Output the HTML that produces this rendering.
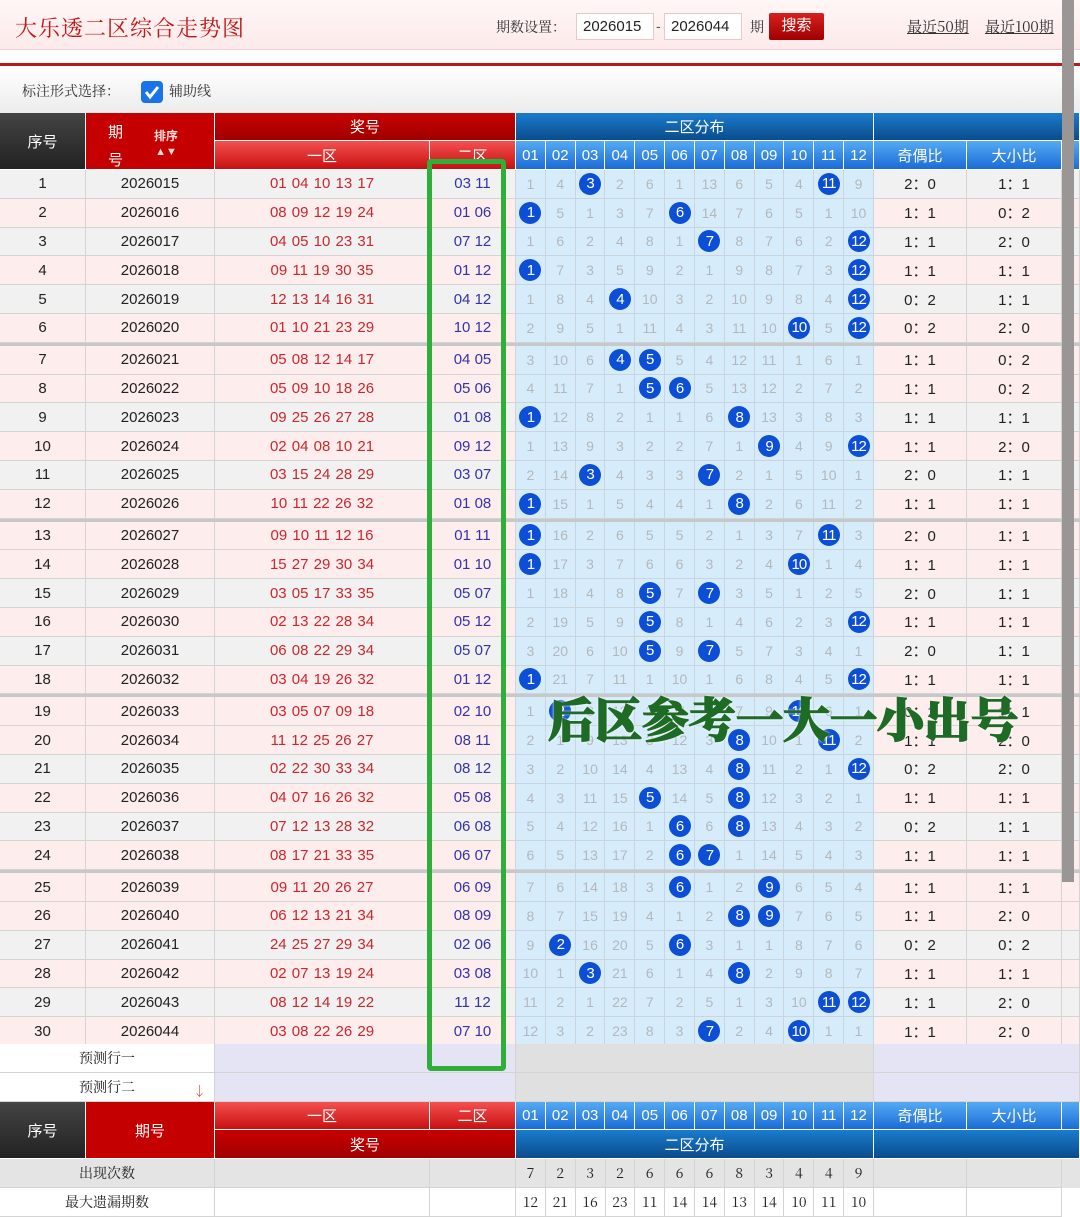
<!DOCTYPE html>
<html><head><meta charset="utf-8"><style>
*{margin:0;padding:0;box-sizing:border-box}
body{width:1080px;height:1208px;overflow:hidden;background:#fff;font-family:"Liberation Sans","Noto Sans CJK SC",sans-serif;position:relative}
.top{position:absolute;left:0;top:0;width:1080px;height:50px;background:linear-gradient(#fff6f6,#fdeaea);border-bottom:1px solid #f0d0d0}
.title{position:absolute;left:15px;top:12px;font-size:22px;color:#c01818;font-family:"Noto Serif CJK SC",serif;letter-spacing:1px}
.qs{position:absolute;left:496px;top:17px;font-size:14px;color:#333;font-family:"Noto Serif CJK SC",serif}
.inp{position:absolute;top:13px;height:27px;width:78px;background:#fff;border:1px solid #e8c8c8;font-size:15px;padding:4px 0 0 6px;color:#222}
.btn{position:absolute;left:769px;top:13px;width:55px;height:27px;background:linear-gradient(#d82020,#a00000);color:#fff;font-size:15px;text-align:center;line-height:26px;border-radius:2px}
.lk{position:absolute;top:16px;font-size:15px;color:#333;text-decoration:underline;font-family:"Noto Serif CJK SC",serif}
.redl{position:absolute;left:0;top:63px;width:1080px;height:3px;background:#b81c1c}
.bar{position:absolute;left:0;top:67px;width:1080px;height:46px;background:linear-gradient(#fff,#ececec)}
.bar .t{position:absolute;left:22px;top:14px;font-size:14px;color:#333;font-family:"Noto Serif CJK SC",serif}
.cb{position:absolute;left:141px;top:81px;width:22px;height:22px;border-radius:4px;background:#1a73e8}
.h{position:absolute;color:#fff;text-align:center;font-size:15px;border-right:1px solid #fff;border-bottom:1px solid #fff;display:flex;align-items:center;justify-content:center}
.dk{background:linear-gradient(#444,#222)}
.rd{background:#c40000}
.rd2{background:linear-gradient(#c80000,#a00000)}
.rl{background:linear-gradient(#f45050,#c81010)}
.bd{background:linear-gradient(#1a7ccc,#0a4c8c)}
.bl{background:linear-gradient(#55aaf2,#1a6cd8)}
#t{position:absolute;left:0;top:170px;width:1080px}
.r{display:flex;height:28.8px;font-size:15px;color:#222;background:#fdeded}
.r.g{background:#f1f1f1}
.r s{text-decoration:none;display:flex;align-items:center;justify-content:center;border-right:1px solid #d4d4d4;border-bottom:1px solid #d4d4d4}
.c0{width:86px}.c1{width:129px}.c2{width:215px;color:#c8282e;word-spacing:1px}.c3{width:86px;color:#3434a8}.c4{width:93px}.c5{width:95px}.c6{width:18px}
.d{width:358px;display:flex;background:#d6ecfb}
.d i{font-style:normal;flex:1;display:flex;align-items:center;justify-content:center;border-right:1px solid #c8d4de;border-bottom:1px solid #c8d4de;color:#b4b8bc;font-size:14px}
.d b{width:22px;height:22px;border-radius:50%;background:#0c4fd6;color:#fff;font-weight:normal;font-size:15px;display:flex;align-items:center;justify-content:center;letter-spacing:-1px}
.sep{height:3px;background:#c8c8c8}
.pr{position:absolute;left:0;width:1080px;height:29px;display:flex}
.pr div{height:29px;border-right:1px solid #d4d4d4;border-bottom:1px solid #d4d4d4;display:flex;align-items:center;justify-content:center;font-size:14px;color:#222;font-family:"Noto Serif CJK SC",serif}
.green{position:absolute;left:427px;top:159px;width:79px;height:912px;border:5px solid #2fae3a;border-radius:4px}
.ov{position:absolute;left:548px;top:684px;font-size:47px;font-weight:900;color:#1e6b26;font-family:"Noto Serif CJK SC",serif;letter-spacing:0px;-webkit-text-stroke:1.5px #1e6b26;text-shadow:0 0 3px #fff,0 0 3px #fff}
.sb{position:absolute;left:1062px;top:0;width:12px;height:882px;background:#9a9696}
</style></head><body>
<div class="top"></div>
<div class="title">大乐透二区综合走势图</div>
<div class="qs">期数设置：</div>
<div class="inp" style="left:576px">2026015</div>
<div style="position:absolute;left:656px;top:18px;font-size:14px;color:#555">-</div>
<div class="inp" style="left:664px">2026044</div>
<div class="qs" style="left:750px">期</div>
<div class="btn">搜索</div>
<div class="lk" style="left:907px">最近50期</div>
<div class="lk" style="left:985px">最近100期</div>
<div class="redl"></div>
<div class="bar"><div class="t">标注形式选择：</div><div class="t" style="left:169px">辅助线</div></div>
<div class="cb"><svg width="22" height="22"><path d="M5 11l4 5 8-10" stroke="#fff" stroke-width="3" fill="none"/></svg></div>

<div class="h dk" style="left:0;top:113px;width:86px;height:57px">序号</div>
<div class="h rd" style="left:86px;top:113px;width:129px;height:57px"><div style="position:absolute;left:22px;top:6px;line-height:28px;font-size:15px">期<br>号</div><div style="position:absolute;left:68px;top:14px;font-size:12px;font-weight:bold;color:#fdd">排序<br><span style="font-size:11px">▲▼</span></div></div>
<div class="h rd2" style="left:215px;top:113px;width:301px;height:28px">奖号</div>
<div class="h rl" style="left:215px;top:141px;width:215px;height:29px">一区</div>
<div class="h rl" style="left:430px;top:141px;width:86px;height:29px">二区</div>
<div class="h bd" style="left:516px;top:113px;width:358px;height:28px">二区分布</div>
<div class="h bd" style="left:874px;top:113px;width:206px;height:28px"></div>
<div style="position:absolute;left:516px;top:141px;width:358px;height:29px;display:flex">
<div class="h bl" style="position:static;flex:1">01</div><div class="h bl" style="position:static;flex:1">02</div><div class="h bl" style="position:static;flex:1">03</div><div class="h bl" style="position:static;flex:1">04</div><div class="h bl" style="position:static;flex:1">05</div><div class="h bl" style="position:static;flex:1">06</div><div class="h bl" style="position:static;flex:1">07</div><div class="h bl" style="position:static;flex:1">08</div><div class="h bl" style="position:static;flex:1">09</div><div class="h bl" style="position:static;flex:1">10</div><div class="h bl" style="position:static;flex:1">11</div><div class="h bl" style="position:static;flex:1">12</div></div>
<div class="h bl" style="left:874px;top:141px;width:93px;height:29px">奇偶比</div>
<div class="h bl" style="left:967px;top:141px;width:95px;height:29px">大小比</div>
<div class="h bl" style="left:1062px;top:141px;width:18px;height:29px"></div>

<div id="t">
<div class="r g"><s class="c0">1</s><s class="c1">2026015</s><s class="c2">01 04 10 13 17</s><s class="c3">03 11</s><div class="d"><i>1</i><i>4</i><i><b>3</b></i><i>2</i><i>6</i><i>1</i><i>13</i><i>6</i><i>5</i><i>4</i><i><b>11</b></i><i>9</i></div><s class="c4">2：0</s><s class="c5">1：1</s><s class="c6"></s></div>
<div class="r"><s class="c0">2</s><s class="c1">2026016</s><s class="c2">08 09 12 19 24</s><s class="c3">01 06</s><div class="d"><i><b>1</b></i><i>5</i><i>1</i><i>3</i><i>7</i><i><b>6</b></i><i>14</i><i>7</i><i>6</i><i>5</i><i>1</i><i>10</i></div><s class="c4">1：1</s><s class="c5">0：2</s><s class="c6"></s></div>
<div class="r g"><s class="c0">3</s><s class="c1">2026017</s><s class="c2">04 05 10 23 31</s><s class="c3">07 12</s><div class="d"><i>1</i><i>6</i><i>2</i><i>4</i><i>8</i><i>1</i><i><b>7</b></i><i>8</i><i>7</i><i>6</i><i>2</i><i><b>12</b></i></div><s class="c4">1：1</s><s class="c5">2：0</s><s class="c6"></s></div>
<div class="r"><s class="c0">4</s><s class="c1">2026018</s><s class="c2">09 11 19 30 35</s><s class="c3">01 12</s><div class="d"><i><b>1</b></i><i>7</i><i>3</i><i>5</i><i>9</i><i>2</i><i>1</i><i>9</i><i>8</i><i>7</i><i>3</i><i><b>12</b></i></div><s class="c4">1：1</s><s class="c5">1：1</s><s class="c6"></s></div>
<div class="r g"><s class="c0">5</s><s class="c1">2026019</s><s class="c2">12 13 14 16 31</s><s class="c3">04 12</s><div class="d"><i>1</i><i>8</i><i>4</i><i><b>4</b></i><i>10</i><i>3</i><i>2</i><i>10</i><i>9</i><i>8</i><i>4</i><i><b>12</b></i></div><s class="c4">0：2</s><s class="c5">1：1</s><s class="c6"></s></div>
<div class="r"><s class="c0">6</s><s class="c1">2026020</s><s class="c2">01 10 21 23 29</s><s class="c3">10 12</s><div class="d"><i>2</i><i>9</i><i>5</i><i>1</i><i>11</i><i>4</i><i>3</i><i>11</i><i>10</i><i><b>10</b></i><i>5</i><i><b>12</b></i></div><s class="c4">0：2</s><s class="c5">2：0</s><s class="c6"></s></div>
<div class="sep"></div>
<div class="r"><s class="c0">7</s><s class="c1">2026021</s><s class="c2">05 08 12 14 17</s><s class="c3">04 05</s><div class="d"><i>3</i><i>10</i><i>6</i><i><b>4</b></i><i><b>5</b></i><i>5</i><i>4</i><i>12</i><i>11</i><i>1</i><i>6</i><i>1</i></div><s class="c4">1：1</s><s class="c5">0：2</s><s class="c6"></s></div>
<div class="r"><s class="c0">8</s><s class="c1">2026022</s><s class="c2">05 09 10 18 26</s><s class="c3">05 06</s><div class="d"><i>4</i><i>11</i><i>7</i><i>1</i><i><b>5</b></i><i><b>6</b></i><i>5</i><i>13</i><i>12</i><i>2</i><i>7</i><i>2</i></div><s class="c4">1：1</s><s class="c5">0：2</s><s class="c6"></s></div>
<div class="r g"><s class="c0">9</s><s class="c1">2026023</s><s class="c2">09 25 26 27 28</s><s class="c3">01 08</s><div class="d"><i><b>1</b></i><i>12</i><i>8</i><i>2</i><i>1</i><i>1</i><i>6</i><i><b>8</b></i><i>13</i><i>3</i><i>8</i><i>3</i></div><s class="c4">1：1</s><s class="c5">1：1</s><s class="c6"></s></div>
<div class="r"><s class="c0">10</s><s class="c1">2026024</s><s class="c2">02 04 08 10 21</s><s class="c3">09 12</s><div class="d"><i>1</i><i>13</i><i>9</i><i>3</i><i>2</i><i>2</i><i>7</i><i>1</i><i><b>9</b></i><i>4</i><i>9</i><i><b>12</b></i></div><s class="c4">1：1</s><s class="c5">2：0</s><s class="c6"></s></div>
<div class="r g"><s class="c0">11</s><s class="c1">2026025</s><s class="c2">03 15 24 28 29</s><s class="c3">03 07</s><div class="d"><i>2</i><i>14</i><i><b>3</b></i><i>4</i><i>3</i><i>3</i><i><b>7</b></i><i>2</i><i>1</i><i>5</i><i>10</i><i>1</i></div><s class="c4">2：0</s><s class="c5">1：1</s><s class="c6"></s></div>
<div class="r"><s class="c0">12</s><s class="c1">2026026</s><s class="c2">10 11 22 26 32</s><s class="c3">01 08</s><div class="d"><i><b>1</b></i><i>15</i><i>1</i><i>5</i><i>4</i><i>4</i><i>1</i><i><b>8</b></i><i>2</i><i>6</i><i>11</i><i>2</i></div><s class="c4">1：1</s><s class="c5">1：1</s><s class="c6"></s></div>
<div class="sep"></div>
<div class="r"><s class="c0">13</s><s class="c1">2026027</s><s class="c2">09 10 11 12 16</s><s class="c3">01 11</s><div class="d"><i><b>1</b></i><i>16</i><i>2</i><i>6</i><i>5</i><i>5</i><i>2</i><i>1</i><i>3</i><i>7</i><i><b>11</b></i><i>3</i></div><s class="c4">2：0</s><s class="c5">1：1</s><s class="c6"></s></div>
<div class="r"><s class="c0">14</s><s class="c1">2026028</s><s class="c2">15 27 29 30 34</s><s class="c3">01 10</s><div class="d"><i><b>1</b></i><i>17</i><i>3</i><i>7</i><i>6</i><i>6</i><i>3</i><i>2</i><i>4</i><i><b>10</b></i><i>1</i><i>4</i></div><s class="c4">1：1</s><s class="c5">1：1</s><s class="c6"></s></div>
<div class="r g"><s class="c0">15</s><s class="c1">2026029</s><s class="c2">03 05 17 33 35</s><s class="c3">05 07</s><div class="d"><i>1</i><i>18</i><i>4</i><i>8</i><i><b>5</b></i><i>7</i><i><b>7</b></i><i>3</i><i>5</i><i>1</i><i>2</i><i>5</i></div><s class="c4">2：0</s><s class="c5">1：1</s><s class="c6"></s></div>
<div class="r"><s class="c0">16</s><s class="c1">2026030</s><s class="c2">02 13 22 28 34</s><s class="c3">05 12</s><div class="d"><i>2</i><i>19</i><i>5</i><i>9</i><i><b>5</b></i><i>8</i><i>1</i><i>4</i><i>6</i><i>2</i><i>3</i><i><b>12</b></i></div><s class="c4">1：1</s><s class="c5">1：1</s><s class="c6"></s></div>
<div class="r g"><s class="c0">17</s><s class="c1">2026031</s><s class="c2">06 08 22 29 34</s><s class="c3">05 07</s><div class="d"><i>3</i><i>20</i><i>6</i><i>10</i><i><b>5</b></i><i>9</i><i><b>7</b></i><i>5</i><i>7</i><i>3</i><i>4</i><i>1</i></div><s class="c4">2：0</s><s class="c5">1：1</s><s class="c6"></s></div>
<div class="r"><s class="c0">18</s><s class="c1">2026032</s><s class="c2">03 04 19 26 32</s><s class="c3">01 12</s><div class="d"><i><b>1</b></i><i>21</i><i>7</i><i>11</i><i>1</i><i>10</i><i>1</i><i>6</i><i>8</i><i>4</i><i>5</i><i><b>12</b></i></div><s class="c4">1：1</s><s class="c5">1：1</s><s class="c6"></s></div>
<div class="sep"></div>
<div class="r"><s class="c0">19</s><s class="c1">2026033</s><s class="c2">03 05 07 09 18</s><s class="c3">02 10</s><div class="d"><i>1</i><i><b>2</b></i><i>8</i><i>12</i><i>2</i><i>11</i><i>2</i><i>7</i><i>9</i><i><b>10</b></i><i>6</i><i>1</i></div><s class="c4">0：2</s><s class="c5">1：1</s><s class="c6"></s></div>
<div class="r"><s class="c0">20</s><s class="c1">2026034</s><s class="c2">11 12 25 26 27</s><s class="c3">08 11</s><div class="d"><i>2</i><i>1</i><i>9</i><i>13</i><i>3</i><i>12</i><i>3</i><i><b>8</b></i><i>10</i><i>1</i><i><b>11</b></i><i>2</i></div><s class="c4">1：1</s><s class="c5">2：0</s><s class="c6"></s></div>
<div class="r g"><s class="c0">21</s><s class="c1">2026035</s><s class="c2">02 22 30 33 34</s><s class="c3">08 12</s><div class="d"><i>3</i><i>2</i><i>10</i><i>14</i><i>4</i><i>13</i><i>4</i><i><b>8</b></i><i>11</i><i>2</i><i>1</i><i><b>12</b></i></div><s class="c4">0：2</s><s class="c5">2：0</s><s class="c6"></s></div>
<div class="r"><s class="c0">22</s><s class="c1">2026036</s><s class="c2">04 07 16 26 32</s><s class="c3">05 08</s><div class="d"><i>4</i><i>3</i><i>11</i><i>15</i><i><b>5</b></i><i>14</i><i>5</i><i><b>8</b></i><i>12</i><i>3</i><i>2</i><i>1</i></div><s class="c4">1：1</s><s class="c5">1：1</s><s class="c6"></s></div>
<div class="r g"><s class="c0">23</s><s class="c1">2026037</s><s class="c2">07 12 13 28 32</s><s class="c3">06 08</s><div class="d"><i>5</i><i>4</i><i>12</i><i>16</i><i>1</i><i><b>6</b></i><i>6</i><i><b>8</b></i><i>13</i><i>4</i><i>3</i><i>2</i></div><s class="c4">0：2</s><s class="c5">1：1</s><s class="c6"></s></div>
<div class="r"><s class="c0">24</s><s class="c1">2026038</s><s class="c2">08 17 21 33 35</s><s class="c3">06 07</s><div class="d"><i>6</i><i>5</i><i>13</i><i>17</i><i>2</i><i><b>6</b></i><i><b>7</b></i><i>1</i><i>14</i><i>5</i><i>4</i><i>3</i></div><s class="c4">1：1</s><s class="c5">1：1</s><s class="c6"></s></div>
<div class="sep"></div>
<div class="r"><s class="c0">25</s><s class="c1">2026039</s><s class="c2">09 11 20 26 27</s><s class="c3">06 09</s><div class="d"><i>7</i><i>6</i><i>14</i><i>18</i><i>3</i><i><b>6</b></i><i>1</i><i>2</i><i><b>9</b></i><i>6</i><i>5</i><i>4</i></div><s class="c4">1：1</s><s class="c5">1：1</s><s class="c6"></s></div>
<div class="r"><s class="c0">26</s><s class="c1">2026040</s><s class="c2">06 12 13 21 34</s><s class="c3">08 09</s><div class="d"><i>8</i><i>7</i><i>15</i><i>19</i><i>4</i><i>1</i><i>2</i><i><b>8</b></i><i><b>9</b></i><i>7</i><i>6</i><i>5</i></div><s class="c4">1：1</s><s class="c5">2：0</s><s class="c6"></s></div>
<div class="r g"><s class="c0">27</s><s class="c1">2026041</s><s class="c2">24 25 27 29 34</s><s class="c3">02 06</s><div class="d"><i>9</i><i><b>2</b></i><i>16</i><i>20</i><i>5</i><i><b>6</b></i><i>3</i><i>1</i><i>1</i><i>8</i><i>7</i><i>6</i></div><s class="c4">0：2</s><s class="c5">0：2</s><s class="c6"></s></div>
<div class="r"><s class="c0">28</s><s class="c1">2026042</s><s class="c2">02 07 13 19 24</s><s class="c3">03 08</s><div class="d"><i>10</i><i>1</i><i><b>3</b></i><i>21</i><i>6</i><i>1</i><i>4</i><i><b>8</b></i><i>2</i><i>9</i><i>8</i><i>7</i></div><s class="c4">1：1</s><s class="c5">1：1</s><s class="c6"></s></div>
<div class="r g"><s class="c0">29</s><s class="c1">2026043</s><s class="c2">08 12 14 19 22</s><s class="c3">11 12</s><div class="d"><i>11</i><i>2</i><i>1</i><i>22</i><i>7</i><i>2</i><i>5</i><i>1</i><i>3</i><i>10</i><i><b>11</b></i><i><b>12</b></i></div><s class="c4">1：1</s><s class="c5">2：0</s><s class="c6"></s></div>
<div class="r"><s class="c0">30</s><s class="c1">2026044</s><s class="c2">03 08 22 26 29</s><s class="c3">07 10</s><div class="d"><i>12</i><i>3</i><i>2</i><i>23</i><i>8</i><i>3</i><i><b>7</b></i><i>2</i><i>4</i><i><b>10</b></i><i>1</i><i>1</i></div><s class="c4">1：1</s><s class="c5">2：0</s><s class="c6"></s></div>
</div>

<div class="pr" style="top:1044px"><div style="width:215px;background:#fff">预测行一</div><div style="width:301px;background:#e4e4f4"></div><div style="width:358px;background:#e0e0e0"></div><div style="width:206px;background:#e4e4f4"></div></div>
<div class="pr" style="top:1073px"><div style="width:215px;background:#fff;position:relative">预测行二<span style="position:absolute;right:8px;top:8px;color:#d03010;font-size:13px">↓</span></div><div style="width:301px;background:#e4e4f4"></div><div style="width:358px;background:#e0e0e0"></div><div style="width:206px;background:#e4e4f4"></div></div>

<div class="h dk" style="left:0;top:1102px;width:86px;height:57px">序号</div>
<div class="h rd" style="left:86px;top:1102px;width:129px;height:57px">期号</div>
<div class="h rl" style="left:215px;top:1102px;width:215px;height:28px">一区</div>
<div class="h rl" style="left:430px;top:1102px;width:86px;height:28px">二区</div>
<div class="h rd2" style="left:215px;top:1130px;width:301px;height:29px">奖号</div>
<div style="position:absolute;left:516px;top:1102px;width:358px;height:28px;display:flex">
<div class="h bl" style="position:static;flex:1">01</div><div class="h bl" style="position:static;flex:1">02</div><div class="h bl" style="position:static;flex:1">03</div><div class="h bl" style="position:static;flex:1">04</div><div class="h bl" style="position:static;flex:1">05</div><div class="h bl" style="position:static;flex:1">06</div><div class="h bl" style="position:static;flex:1">07</div><div class="h bl" style="position:static;flex:1">08</div><div class="h bl" style="position:static;flex:1">09</div><div class="h bl" style="position:static;flex:1">10</div><div class="h bl" style="position:static;flex:1">11</div><div class="h bl" style="position:static;flex:1">12</div></div>
<div class="h bl" style="left:874px;top:1102px;width:93px;height:28px">奇偶比</div>
<div class="h bl" style="left:967px;top:1102px;width:95px;height:28px">大小比</div>
<div class="h bl" style="left:1062px;top:1102px;width:18px;height:28px"></div>
<div class="h bd" style="left:516px;top:1130px;width:358px;height:29px">二区分布</div>
<div class="h bd" style="left:874px;top:1130px;width:206px;height:29px"></div>

<div class="pr" style="top:1159px;background:#e4e4e4"><div style="width:215px">出现次数</div><div style="width:215px"></div><div style="width:86px"></div><div style="width:358px;display:flex;border:none"><div style="flex:1">7</div><div style="flex:1">2</div><div style="flex:1">3</div><div style="flex:1">2</div><div style="flex:1">6</div><div style="flex:1">6</div><div style="flex:1">6</div><div style="flex:1">8</div><div style="flex:1">3</div><div style="flex:1">4</div><div style="flex:1">4</div><div style="flex:1">9</div></div><div style="width:93px"></div><div style="width:95px"></div></div>
<div class="pr" style="top:1188px;background:#fff"><div style="width:215px">最大遗漏期数</div><div style="width:215px"></div><div style="width:86px"></div><div style="width:358px;display:flex;border:none"><div style="flex:1">12</div><div style="flex:1">21</div><div style="flex:1">16</div><div style="flex:1">23</div><div style="flex:1">11</div><div style="flex:1">14</div><div style="flex:1">14</div><div style="flex:1">13</div><div style="flex:1">14</div><div style="flex:1">10</div><div style="flex:1">11</div><div style="flex:1">10</div></div><div style="width:93px"></div><div style="width:95px"></div></div>

<div class="green"></div>
<div class="ov">后区参考一大一小出号</div>
<div class="sb"></div>
</body></html>
